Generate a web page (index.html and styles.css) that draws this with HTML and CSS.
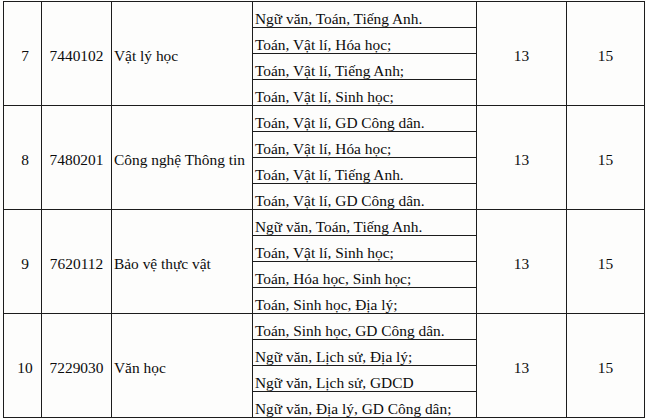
FILE: index.html
```html
<!DOCTYPE html>
<html lang="vi">
<head>
<meta charset="utf-8">
<title>Bảng điểm chuẩn</title>
<link rel="stylesheet" href="styles.css">
</head>
<body>
<table class="grid">
  <colgroup>
    <col class="c-stt">
    <col class="c-code">
    <col class="c-name">
    <col class="c-combo">
    <col class="c-s1">
    <col class="c-s2">
  </colgroup>
  <tbody>
    <tr>
      <td class="stt" rowspan="4">7</td>
      <td class="code" rowspan="4">7440102</td>
      <td class="name" rowspan="4">Vật lý học</td>
      <td class="combo">Ngữ văn, Toán, Tiếng Anh.</td>
      <td class="score" rowspan="4">13</td>
      <td class="score" rowspan="4">15</td>
    </tr>
    <tr><td class="combo">Toán, Vật lí, Hóa học;</td></tr>
    <tr><td class="combo">Toán, Vật lí, Tiếng Anh;</td></tr>
    <tr><td class="combo">Toán, Vật lí, Sinh học;</td></tr>

    <tr>
      <td class="stt" rowspan="4">8</td>
      <td class="code" rowspan="4">7480201</td>
      <td class="name" rowspan="4">Công nghệ Thông tin</td>
      <td class="combo">Toán, Vật lí, GD Công dân.</td>
      <td class="score" rowspan="4">13</td>
      <td class="score" rowspan="4">15</td>
    </tr>
    <tr><td class="combo">Toán, Vật lí, Hóa học;</td></tr>
    <tr><td class="combo">Toán, Vật lí, Tiếng Anh.</td></tr>
    <tr><td class="combo">Toán, Vật lí, GD Công dân.</td></tr>

    <tr>
      <td class="stt" rowspan="4">9</td>
      <td class="code" rowspan="4">7620112</td>
      <td class="name" rowspan="4">Bảo vệ thực vật</td>
      <td class="combo">Ngữ văn, Toán, Tiếng Anh.</td>
      <td class="score" rowspan="4">13</td>
      <td class="score" rowspan="4">15</td>
    </tr>
    <tr><td class="combo">Toán, Vật lí, Sinh học;</td></tr>
    <tr><td class="combo">Toán, Hóa học, Sinh học;</td></tr>
    <tr><td class="combo">Toán, Sinh học, Địa lý;</td></tr>

    <tr>
      <td class="stt" rowspan="4">10</td>
      <td class="code" rowspan="4">7229030</td>
      <td class="name" rowspan="4">Văn học</td>
      <td class="combo">Toán, Sinh học, GD Công dân.</td>
      <td class="score" rowspan="4">13</td>
      <td class="score" rowspan="4">15</td>
    </tr>
    <tr><td class="combo">Ngữ văn, Lịch sử, Địa lý;</td></tr>
    <tr><td class="combo">Ngữ văn, Lịch sử, GDCD</td></tr>
    <tr><td class="combo">Ngữ văn, Địa lý, GD Công dân;</td></tr>
  </tbody>
</table>
</body>
</html>
```

FILE: styles.css
```css
html, body {
  margin: 0;
  padding: 0;
  background: #fdfdfc;
}

body {
  padding: 1px 0 0 3px;
  font-family: "Liberation Serif", "Times New Roman", serif;
  color: #0c0c0c;
  font-size: 15.4px;
}

.grid {
  border-collapse: collapse;
  table-layout: fixed;
  width: 641px;
}

.c-stt { width: 38px; }
.c-code { width: 70px; }
.c-name { width: 141px; }
.c-combo { width: 224px; }
.c-s1 { width: 90px; }
.c-s2 { width: 78px; }

.grid td {
  border: 1px solid #1c1c1c;
  padding: 0;
  height: 25px;
  white-space: nowrap;
}

.stt {
  text-align: center;
  vertical-align: middle;
  padding-left: 5px !important;
  padding-top: 5px !important;
}

.code {
  text-align: center;
  vertical-align: middle;
  padding-top: 5px !important;
}

.name {
  text-align: left;
  vertical-align: middle;
  padding-left: 2px !important;
  padding-top: 5px !important;
}

.combo {
  vertical-align: bottom;
  padding-left: 2px !important;
  line-height: 17px;
}

.score {
  text-align: center;
  vertical-align: middle;
  padding-top: 5px !important;
}
```
